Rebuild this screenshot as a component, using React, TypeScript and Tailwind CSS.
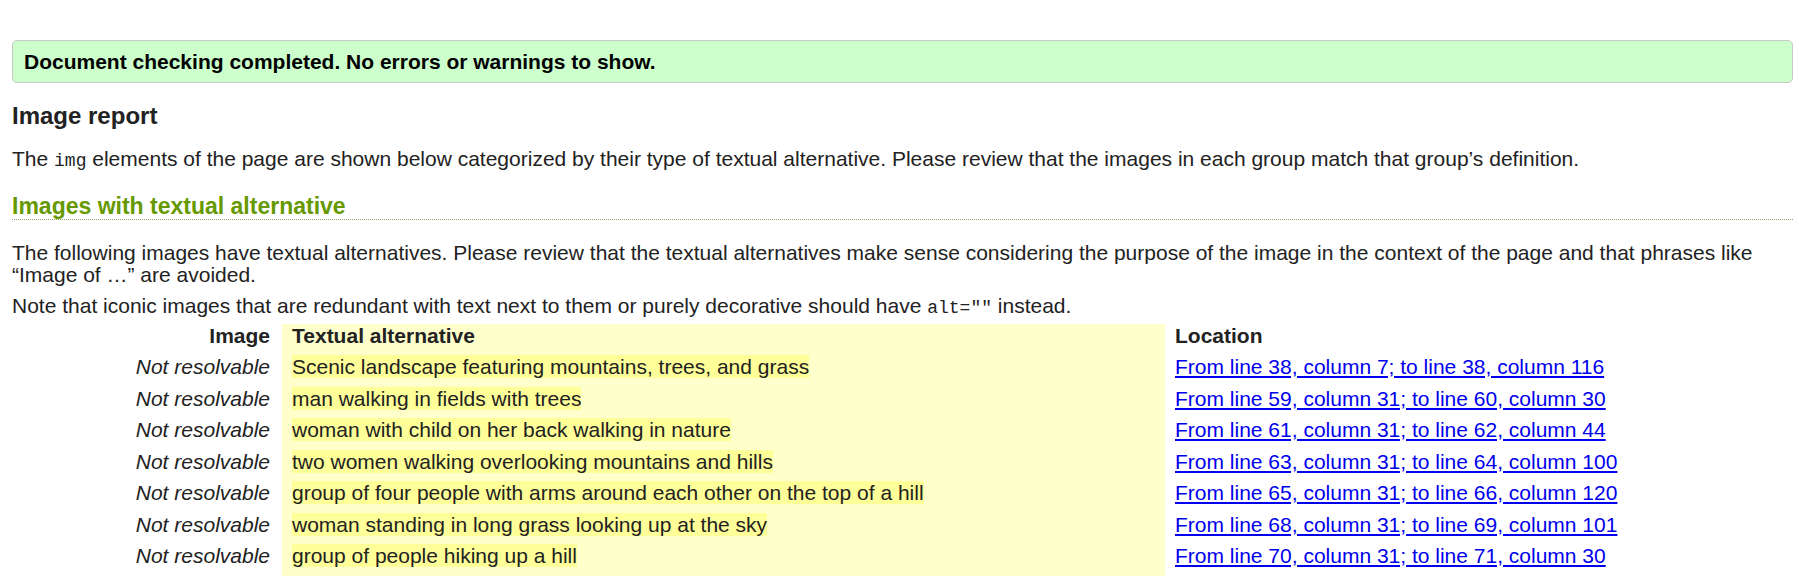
import React from 'react';

const rows = [
  { alt: 'Scenic landscape featuring mountains, trees, and grass', loc: 'From line 38, column 7; to line 38, column 116' },
  { alt: 'man walking in fields with trees', loc: 'From line 59, column 31; to line 60, column 30' },
  { alt: 'woman with child on her back walking in nature', loc: 'From line 61, column 31; to line 62, column 44' },
  { alt: 'two women walking overlooking mountains and hills', loc: 'From line 63, column 31; to line 64, column 100' },
  { alt: 'group of four people with arms around each other on the top of a hill', loc: 'From line 65, column 31; to line 66, column 120' },
  { alt: 'woman standing in long grass looking up at the sky', loc: 'From line 68, column 31; to line 69, column 101' },
  { alt: 'group of people hiking up a hill', loc: 'From line 70, column 31; to line 71, column 30' }
];

const App = () => {
  return (
    <div className="min-h-screen bg-white pt-[40px] pl-[12px] pr-[6px] font-['Liberation_Sans',Arial,sans-serif] text-[21px] text-[#222]">
      {/* Success banner */}
      <div className="h-[43px] flex items-center rounded-[5px] border border-[#c8c8c8] bg-[#ccffcc] pl-[11px] font-bold text-black leading-[24px]">
        Document checking completed. No errors or warnings to show.
      </div>

      <h2 className="mt-[19px] text-[24px] leading-[28px] font-bold text-[#222]">Image report</h2>

      <p className="mt-[17px] leading-[24px]">
        The <code className="font-['Liberation_Mono',monospace] text-[18px]">img</code> elements of the page are shown below categorized by their type of textual alternative. Please review that the images in each group match that group’s definition.
      </p>

      <h3 className="mt-[20px] text-[23px] leading-[26px] font-bold text-[#669900] border-b border-dotted border-[#999966]">
        Images with textual alternative
      </h3>

      <p className="mt-[22px] leading-[21.5px]">
        The following images have textual alternatives. Please review that the textual alternatives make sense considering the purpose of the image in the context of the page and that phrases like “Image of …” are avoided.
      </p>
      <p className="mt-[10px] leading-[21.5px]">
        Note that iconic images that are redundant with text next to them or purely decorative should have <code className="font-['Liberation_Mono',monospace] text-[18px]">alt=""</code> instead.
      </p>

      {/* Report table */}
      <div className="mt-[4px] ml-[116px] grid grid-cols-[154px_883px_auto] leading-[21.5px]">
        <div className="h-[31.5px] pt-[1px] pr-[12px] text-right font-bold">Image</div>
        <div className="h-[31.5px] pt-[1px] pl-[10px] bg-[#ffffcc] font-bold">Textual alternative</div>
        <div className="h-[31.5px] pt-[1px] pl-[10px] font-bold">Location</div>
        {rows.map((r) => (
          <React.Fragment key={r.loc}>
            <div className="h-[31.5px] pt-[1px] pr-[12px] text-right italic">Not resolvable</div>
            <div className="h-[31.5px] pt-[1px] pl-[10px] bg-[#ffffcc]">
              <span className="bg-[#ffff99]">{r.alt}</span>
            </div>
            <div className="h-[31.5px] pt-[1px] pl-[10px]">
              <a href="#" className="text-[#0000ee] underline">{r.loc}</a>
            </div>
          </React.Fragment>
        ))}
      </div>
    </div>
  );
};

export default App;
